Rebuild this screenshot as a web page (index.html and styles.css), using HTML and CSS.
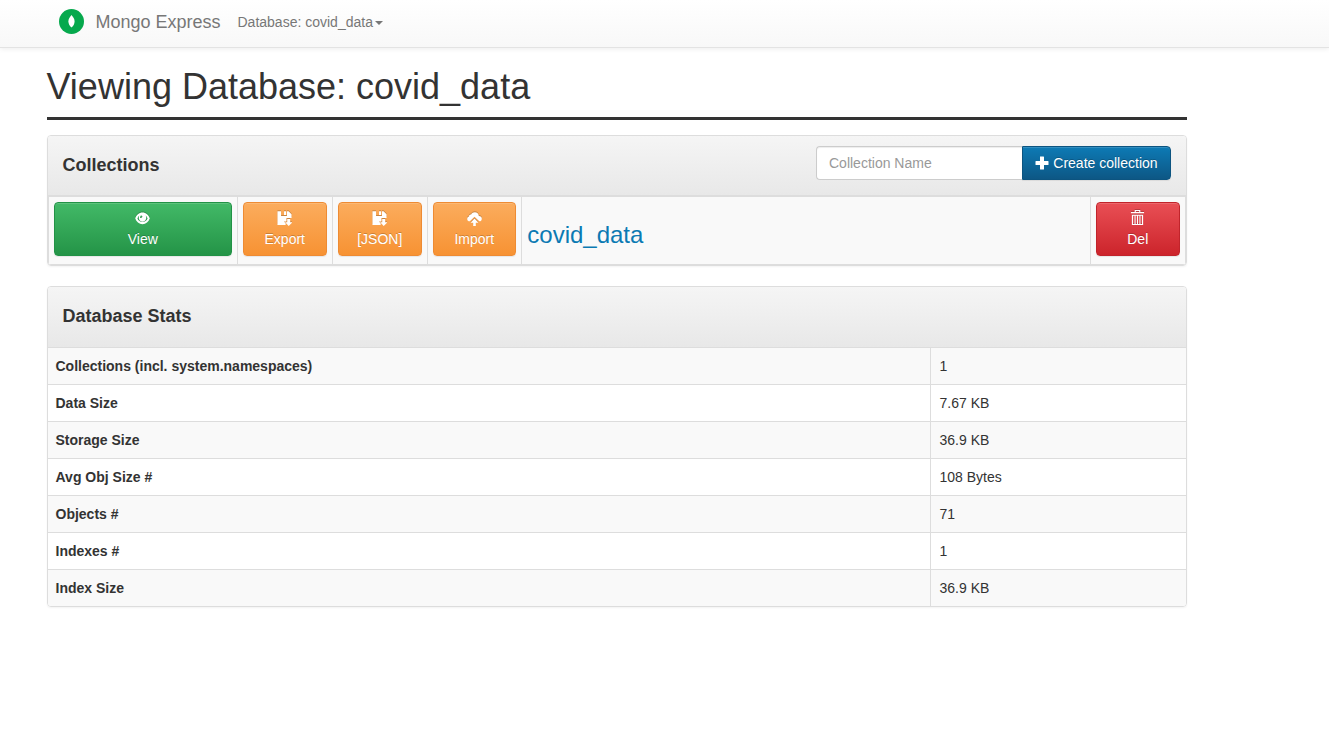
FILE: index.html
```html
<!DOCTYPE html>
<html lang="en">
<head>
<meta charset="utf-8">
<title>covid_data - Mongo Express</title>
<link rel="stylesheet" href="styles.css">
</head>
<body>
<nav class="navbar">
  <a class="brand">
    <svg class="logo" viewBox="0 0 25 25"><circle cx="12.5" cy="12.5" r="12.5" fill="#06a94d"/><path d="M12.5 6C10.5 8.300 9.400 10.200 9.400 12.400s1.100 4.100 3.100 6.200c2-2.100 3.100-4 3.100-6.200S14.500 8.300 12.500 6z" fill="#fff"/></svg>
    <span class="brand-name">Mongo Express</span>
  </a>
  <a class="nav-link">Database: covid_data<span class="caret"></span></a>
</nav>
<main class="container">
  <h1 class="page-title">Viewing Database: covid_data</h1>

  <section class="panel">
    <header class="panel-heading">
      <h3 class="panel-title">Collections</h3>
      <form class="create">
        <input class="create-input" type="text" placeholder="Collection Name">
        <button class="btn btn-primary" type="button"><svg class="icon-plus" viewBox="0 0 14 14"><path d="M5 .5h3.500q.5 0 .5.5v4h4q.5 0 .5.500v3q0 .5-.5.500H9v4q0 .5-.5.500H5.500q-.5 0-.5-.5V9H1q-.5 0-.5-.5v-3Q.5 5 1 5h4z"/></svg>Create collection</button>
      </form>
    </header>
    <div class="collection-row">
      <div class="cell"><a class="btn btn-tall btn-success"><span class="icon-line"><svg class="icon" viewBox="0 0 16 16"><path fill-rule="evenodd" d="M8 1.500C4.300 1.500 1.500 4.200.2 7.800 1.500 11.800 4.300 14 8 14s6.500-2.200 7.800-6.200C14.500 4.200 11.700 1.500 8 1.500zM2.600 7.900c.4-1.200 1.100-2.200 2-3-.3.700-.5 1.500-.5 2.300a3.900 3.900 0 0 0 7.800 0c0-.8-.2-1.600-.5-2.300.9.800 1.600 1.800 2 3-1 2.300-2.900 3.700-5.400 3.700s-4.400-1.400-5.400-3.700zM6 5c1.400-.7 2.200.3 1.700 1.400-.4.900-1.500 1.300-2.200 1C5.300 6.400 5.500 5.500 6 5z"/></svg></span><span>View</span></a></div>
      <div class="cell"><a class="btn btn-tall btn-warning"><span class="icon-line"><svg class="icon" viewBox="0 0 16 16"><path d="M.5.300H4.300V5.400h6.300V.3h1.700L15.500 3.500v4H10v3.600H7.400L9.200 13v2H.5zM7.500.3H9.600V4.300H7.500zM10.900 8.500h3.200v3.600H16.300L12.500 16 8.700 12.100h2.200z"/></svg></span><span>Export</span></a></div>
      <div class="cell"><a class="btn btn-tall btn-warning"><span class="icon-line"><svg class="icon" viewBox="0 0 16 16"><path d="M.5.300H4.300V5.400h6.300V.3h1.700L15.500 3.500v4H10v3.600H7.400L9.200 13v2H.5zM7.500.3H9.600V4.300H7.500zM10.900 8.500h3.200v3.600H16.300L12.500 16 8.700 12.100h2.200z"/></svg></span><span>[JSON]</span></a></div>
      <div class="cell"><a class="btn btn-tall btn-warning"><span class="icon-line icon-line-centered"><svg class="icon" viewBox="0 0 16 16"><path d="M3 11C1.300 11 .2 9.800.2 8.400c0-1.300.9-2.300 2-2.600-.1-1.400 1-2.300 2.200-2C5.200 2.100 6.600 1.300 8.300 1.300c2.400 0 4.200 1.800 4.300 4.100 1.700-.1 3.200 1.200 3.200 2.800S14.600 11 13.200 11L8 6 3 11zM8 8l4.200 4.400H9.400V16.500H6.600v-4.100H3.800z"/></svg></span><span>Import</span></a></div>
      <div class="cell name-cell"><a class="collection-link">covid_data</a></div>
      <div class="cell"><a class="btn btn-tall btn-danger"><span class="icon-line icon-line-centered icon-line-trash"><svg class="icon" viewBox="0 0 16 16"><path fill-rule="evenodd" d="M5 0h6v2h4v1.400H1V2h4zM6.200 1v1h3.600V1zM2 5h12v11H2zM3.300 6v8.800h1.500V6zM6 6v8.800h1.400V6zM8.600 6v8.800H10V6zM11.200 6v8.800h1.500V6z"/></svg></span><span>Del</span></a></div>
    </div>
  </section>

  <section class="panel">
    <header class="panel-heading panel-heading-stats">
      <h3 class="panel-title">Database Stats</h3>
    </header>
    <dl class="stats">
      <div class="stat"><dt>Collections (incl. system.namespaces)</dt><dd>1</dd></div>
      <div class="stat"><dt>Data Size</dt><dd>7.67 KB</dd></div>
      <div class="stat"><dt>Storage Size</dt><dd>36.9 KB</dd></div>
      <div class="stat"><dt>Avg Obj Size #</dt><dd>108 Bytes</dd></div>
      <div class="stat"><dt>Objects #</dt><dd>71</dd></div>
      <div class="stat"><dt>Indexes #</dt><dd>1</dd></div>
      <div class="stat"><dt>Index Size</dt><dd>36.9 KB</dd></div>
    </dl>
  </section>
</main>
</body>
</html>
```
FILE: styles.css
```css
* { box-sizing: border-box; }

body {
  margin: 0;
  font: 14px/20px "Liberation Sans", Arial, sans-serif;
  color: #333;
  background: #fff;
}

.navbar {
  display: flex;
  height: 48px;
  padding-left: 59px;
  border-bottom: 1px solid #e3e3e3;
  background: linear-gradient(#fff, #f8f8f8);
  box-shadow: 0 1px 5px rgba(0, 0, 0, .075);
  color: #777;
}
.brand { display: flex; width: 178.5px; padding-top: 9px; }
.logo { width: 25px; height: 25px; }
.brand-name { margin-left: 11.5px; font-size: 18px; line-height: 26px; }
.nav-link { padding-top: 12px; }
.caret {
  display: inline-block;
  margin-left: 2px;
  vertical-align: middle;
  border-top: 4px solid;
  border-left: 4px solid transparent;
  border-right: 4px solid transparent;
}

.container { width: 1140px; margin-left: 47px; }
.page-title {
  height: 72px;
  margin: 0 0 15px;
  padding-top: 19px;
  border-bottom: 3px solid #333;
  font-size: 36px;
  font-weight: 400;
  line-height: 40px;
  text-indent: -.5px;
}

.panel {
  margin-bottom: 20px;
  border: 1px solid #ddd;
  border-radius: 4px;
  box-shadow: 0 1px 2px rgba(0, 0, 0, .05);
  overflow: hidden;
}
.panel-heading {
  display: flex;
  justify-content: space-between;
  height: 60px;
  padding: 10px 15px 10px 14.5px;
  border-bottom: 1px solid #ddd;
  background: linear-gradient(#f5f5f5, #e8e8e8);
}
.panel-heading-stats { height: 61px; }
.panel-title { margin: 0; font-size: 18px; line-height: 38px; }

.create { display: flex; height: 34px; }
.create-input {
  width: 206px;
  padding: 6px 12px;
  border: 1px solid #ccc;
  border-right: 0;
  border-radius: 4px 0 0 4px;
  background: #fff;
  box-shadow: inset 0 1px 1px rgba(0, 0, 0, .075);
  font: inherit;
}
.create-input::placeholder { color: #999; opacity: 1; }

.btn {
  border: 1px solid;
  border-radius: 4px;
  box-shadow: inset 0 1px 0 rgba(255, 255, 255, .15), 0 1px 1px rgba(0, 0, 0, .075);
  color: #fff;
  font: inherit;
  text-shadow: 0 -1px 0 rgba(0, 0, 0, .2);
}
.btn-primary {
  display: flex;
  align-items: center;
  width: 149px;
  padding: 0 12px;
  border-color: #0c5480;
  border-radius: 0 4px 4px 0;
  background: linear-gradient(#0d7ab5, #0d5785);
  white-space: nowrap;
}
.icon-plus { width: 14px; height: 14px; margin-right: 4.3px; fill: #fff; flex: none; }

.btn-tall {
  display: flex;
  flex-direction: column;
  align-items: center;
  height: 54px;
  padding: 6px .5px 0 0;
}
.icon-line { display: flex; height: 20px; padding: 2px 1px 0 0; }
.icon-line-centered { padding-right: 0; }
.icon-line-trash { padding-top: 1px; }
.icon { width: 15px; height: 15px; fill: #fff; filter: drop-shadow(0 -1px 0 rgba(0, 0, 0, .2)); }
.btn-success { border-color: #229246; background: linear-gradient(#42b967, #249447); }
.btn-warning { border-color: #ee8b33; background: linear-gradient(#fbac5d, #f79233); }
.btn-danger { border-color: #c1242b; background: linear-gradient(#e94f55, #cc242b); }

.collection-row {
  display: grid;
  grid-template-columns: 189px 95px 95px 94px 569px 1fr;
  height: 69px;
  border: 1px solid #ddd;
  background: #f9f9f9;
}
.cell { padding: 5px; border-right: 1px solid #ddd; }
.cell:last-child { border-right: 0; }
.name-cell { display: flex; align-items: center; padding-left: 5.3px; }
.collection-link { padding-top: 9px; color: #0b7ab3; font-size: 24px; line-height: 26px; }

.stats { margin: 0; }
.stat {
  display: grid;
  grid-template-columns: 883px 1fr;
  height: 37px;
  border-bottom: 1px solid #ddd;
}
.stat:nth-child(odd) { background: #f9f9f9; }
.stat:last-child { height: 36px; border-bottom: 0; }
.stat dt { padding: 8px 7.5px; border-right: 1px solid #ddd; font-weight: 700; }
.stat dd { margin: 0; padding: 8px 8.5px; }
```
